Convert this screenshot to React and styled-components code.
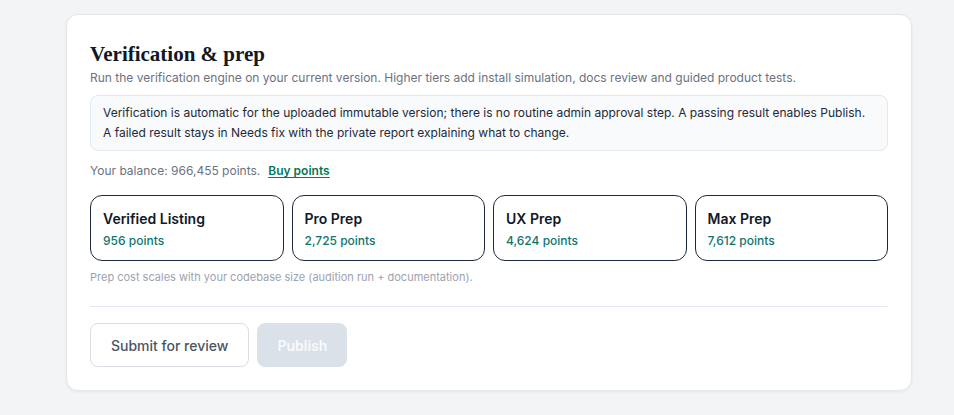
import React from "react";
import styled, { createGlobalStyle } from "styled-components";

const Global = createGlobalStyle`
  html, body { margin: 0; padding: 0; background: #f3f4f6; }
  body { font-family: Inter, "Noto Sans", sans-serif; -webkit-font-smoothing: antialiased; }
  * { box-sizing: border-box; }
`;

const Page = styled.div`
  padding: 14px 42px 24px 66px;
`;

const Card = styled.section`
  width: 846px;
  background: #fff;
  border: 1px solid #e5e7eb;
  border-radius: 12px;
  box-shadow: 0 1px 3px rgba(15, 23, 42, 0.06);
  padding: 25px 23px 23px;
  display: flex;
  flex-direction: column;
`;

const Title = styled.h2`
  margin: 0;
  font-family: "Liberation Serif", "DejaVu Serif", serif;
  font-weight: 700;
  font-size: 21px;
  line-height: 28px;
  color: #111827;
`;

const Subtitle = styled.p`
  margin: 1px 0 0;
  font-size: 12px;
  line-height: 18px;
  color: #6b7280;
`;

const InfoBox = styled.div`
  margin-top: 8px;
  background: #f8fafc;
  border: 1px solid #e2e8f0;
  border-radius: 8px;
  padding: 7px 12px 7px;
  font-size: 12px;
  line-height: 20px;
  color: #1f2937;
`;

const Balance = styled.div`
  margin-top: 11px;
  font-size: 12px;
  line-height: 18px;
  color: #6b7280;
  display: flex;
  gap: 8px;
`;

const BuyLink = styled.a`
  color: #047857;
  font-weight: 600;
  text-decoration: underline;
  text-underline-offset: 2px;
  cursor: pointer;
`;

const Tiers = styled.div`
  margin-top: 15px;
  display: grid;
  grid-template-columns: repeat(4, 1fr);
  gap: 8px;
`;

const Tier = styled.button`
  height: 66px;
  background: #fff;
  border: 1px solid #1e293b;
  border-radius: 12px;
  padding: 13px 12px 12px;
  text-align: left;
  font-family: inherit;
  display: flex;
  flex-direction: column;
  justify-content: flex-start;
  gap: 3px;
  cursor: pointer;
`;

const TierName = styled.span`
  font-size: 14px;
  font-weight: 600;
  line-height: 20px;
  color: #111827;
`;

const TierPoints = styled.span`
  font-size: 12px;
  line-height: 18px;
  font-weight: 500;
  color: #0f766e;
`;

const Note = styled.p`
  margin: 8px 0 0;
  font-size: 11px;
  line-height: 16px;
  color: #9ca3af;
`;

const Divider = styled.hr`
  margin: 21px 0 0;
  border: 0;
  border-top: 1px solid #e2e8f0;
`;

const Actions = styled.div`
  margin-top: 16px;
  display: flex;
  gap: 8px;
`;

const Button = styled.button`
  height: 44px;
  padding: ${(p) => (p.$primary ? "0 19px" : "0 20px")};
  border-radius: 8px;
  font-family: inherit;
  font-size: 14px;
  font-weight: ${(p) => (p.$primary ? 600 : 500)};
  border: 1px solid ${(p) => (p.$primary ? "#dbe1e9" : "#d9dee5")};
  background: ${(p) => (p.$primary ? "#dbe1e9" : "#fff")};
  color: ${(p) => (p.$primary ? "#f8fafc" : "#4b5563")};
  cursor: ${(p) => (p.disabled ? "default" : "pointer")};
`;

const tiers = [
  { name: "Verified Listing", points: 956 },
  { name: "Pro Prep", points: 2725 },
  { name: "UX Prep", points: 4624 },
  { name: "Max Prep", points: 7612 },
];

export default function App() {
  return (
    <>
      <Global />
      <Page>
        <Card>
          <Title>Verification &amp; prep</Title>
          <Subtitle>
            Run the verification engine on your current version. Higher tiers add install simulation, docs review and guided product tests.
          </Subtitle>
          <InfoBox>
            Verification is automatic for the uploaded immutable version; there is no routine admin approval step. A passing result enables Publish.
            <br />
            A failed result stays in Needs fix with the private report explaining what to change.
          </InfoBox>
          <Balance>
            <span>Your balance: 966,455 points.</span>
            <BuyLink>Buy points</BuyLink>
          </Balance>
          <Tiers>
            {tiers.map((t) => (
              <Tier key={t.name}>
                <TierName>{t.name}</TierName>
                <TierPoints>{t.points.toLocaleString("en-US")} points</TierPoints>
              </Tier>
            ))}
          </Tiers>
          <Note>Prep cost scales with your codebase size (audition run + documentation).</Note>
          <Divider />
          <Actions>
            <Button>Submit for review</Button>
            <Button $primary disabled>Publish</Button>
          </Actions>
        </Card>
      </Page>
    </>
  );
}
